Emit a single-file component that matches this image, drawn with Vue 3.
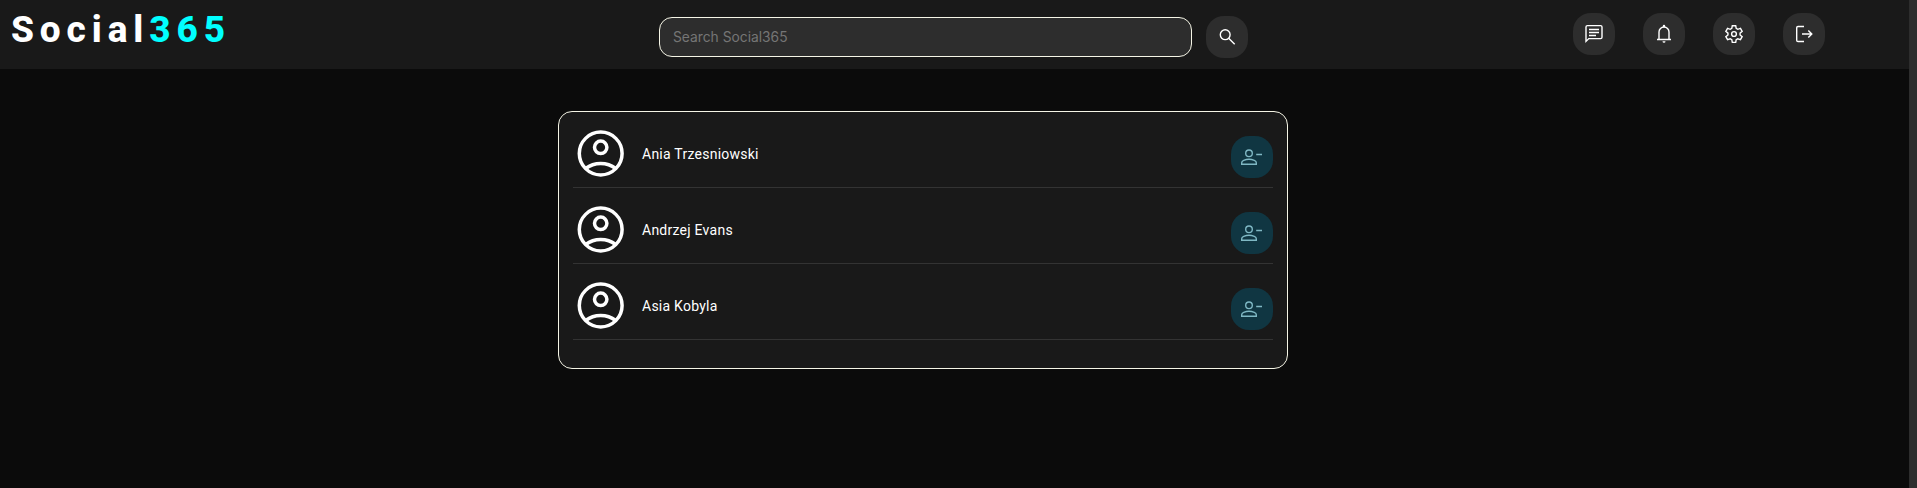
<script setup>
import { ref } from 'vue'

const query = ref('')
const friends = ['Ania Trzesniowski', 'Andrzej Evans', 'Asia Kobyla']
</script>

<template>
  <div class="page">
    <div class="content">
      <header class="topbar">
        <div class="logo">Social<span class="accent">365</span></div>
        <form class="search" @submit.prevent>
          <input v-model="query" class="search-input" type="text" placeholder="Search Social365" />
          <button class="round" aria-label="Search">
            <svg viewBox="0 0 24 24"><circle cx="10.2" cy="9.7" r="4.9" /><path d="M13.7 13.2l6 6" /></svg>
          </button>
        </form>
        <nav class="actions">
          <button class="round" aria-label="Messages">
            <svg viewBox="0 0 24 24"><path d="M4 19.4V5q0-1.4 1.4-1.4h13.2Q20 3.6 20 5v10.200q0 1.400-1.400 1.400H6.800z" /><path d="M7 7.500h10M7 10.500h10M7 13.500h7" /></svg>
          </button>
          <button class="round" aria-label="Notifications">
            <svg viewBox="0 0 24 24"><path d="M5 17.500h14M7 17.500V10a5 5 0 0 1 10 0v7.500" /><path class="solid" d="M10.800 5.300V4a1.200 1.200 0 0 1 2.400 0v1.300zM10.500 19.200h3a1.500 1.500 0 0 1-3 0z" /></svg>
          </button>
          <button class="round" aria-label="Settings">
            <svg viewBox="0 0 24 24"><path d="M10.300 3.700h3.400l.5 2.700 1.600.95 2.650-.95 1.700 3-2.100 1.750v1.800l2.100 1.750-1.700 3-2.650-.95-1.600.95-.5 2.700h-3.400l-.5-2.700-1.600-.95-2.650.95-1.700-3 2.100-1.750v-1.800L3.850 9.400l1.700-3 2.650.95 1.600-.95z" /><circle cx="12" cy="12" r="2.400" /></svg>
          </button>
          <button class="round" aria-label="Log out">
            <svg viewBox="0 0 24 24"><path d="M12 4.500H6Q4.700 4.500 4.700 5.800v12.400q0 1.300 1.300 1.300h6M10 12h9.500M16.300 8.500l3.500 3.500-3.500 3.500" /></svg>
          </button>
        </nav>
      </header>
      <main class="card">
        <div v-for="name in friends" :key="name" class="friend">
          <svg class="avatar" viewBox="0 0 56 56"><circle cx="27.700" cy="28.500" r="21.400" /><circle cx="27.700" cy="22.300" r="6.200" /><path d="M12.700 43.500Q19.200 38.400 27.700 38.400t15 5.100" /></svg>
          <span class="name">{{ name }}</span>
          <button class="round remove" aria-label="Remove friend">
            <svg viewBox="0 0 24 24"><circle cx="9" cy="8.300" r="3.300" /><path d="M1.700 19.300v-1.500q0-1.700 2-2.500 5.300-2.100 10.600 0 2 .8 2 2.500v1.500zM16.200 9.500h5.800" /></svg>
          </button>
        </div>
      </main>
    </div>
    <aside class="scroll-track"></aside>
  </div>
</template>

<style>
body { background: #0b0b0b; overflow: hidden; }
</style>

<style scoped>
.page {
  display: flex;
  height: 488px;
  background: #0b0b0b;
  color: #fff;
  font-family: Roboto, sans-serif;
}
.content { flex: 1; }
.scroll-track { width: 8px; background: #2d2d2d; }
.topbar {
  box-sizing: border-box;
  display: flex;
  align-items: flex-start;
  height: 69px;
  padding-left: 11px;
  background: #191919;
}
.logo {
  width: 648px;
  margin-top: 8px;
  font-size: 37px;
  line-height: 43px;
  font-weight: 800;
  letter-spacing: 5.9px;
}
.accent { color: #0ff; }
.search { display: flex; gap: 14px; margin-top: 16px; }
.search-input {
  box-sizing: border-box;
  width: 533px;
  height: 40px;
  margin: 1px 0 0;
  padding: 0 13px 1px;
  border: 1px solid #f5f5e6;
  border-radius: 13px;
  outline: none;
  background: #2d2d2d;
  color: #fff;
  font-family: Inter, sans-serif;
  font-size: 13.8px;
}
.search-input::placeholder { color: #757575; opacity: 1; }
.round {
  display: flex;
  align-items: center;
  justify-content: center;
  flex: none;
  width: 42px;
  height: 42px;
  padding: 0;
  border: 0;
  border-radius: 18px;
  background: #2d2d2d;
  color: #fff;
}
.round svg {
  width: 24px;
  height: 24px;
  fill: none;
  stroke: currentColor;
  stroke-width: 1.4;
}
.round .solid { fill: currentColor; stroke: none; }
.actions { display: flex; gap: 28px; margin: 13px 0 0 325px; }
.card {
  box-sizing: border-box;
  width: 730px;
  height: 258px;
  margin: 42px 0 0 558px;
  padding: 0 14px;
  border: 1px solid #f5f5e6;
  border-radius: 14px;
  background: #191919;
}
.friend {
  box-sizing: border-box;
  display: flex;
  align-items: flex-start;
  height: 76px;
  border-bottom: 1px solid #333;
}
.avatar {
  width: 56px;
  height: 56px;
  margin-top: 13px;
  fill: none;
  stroke: #fff;
  stroke-width: 3.5;
}
.name { margin: 33px auto 0 13px; font-size: 14px; line-height: 18px; letter-spacing: .25px; }
.remove { margin-top: 24px; background: #103642; color: #7fb8c4; }
</style>
